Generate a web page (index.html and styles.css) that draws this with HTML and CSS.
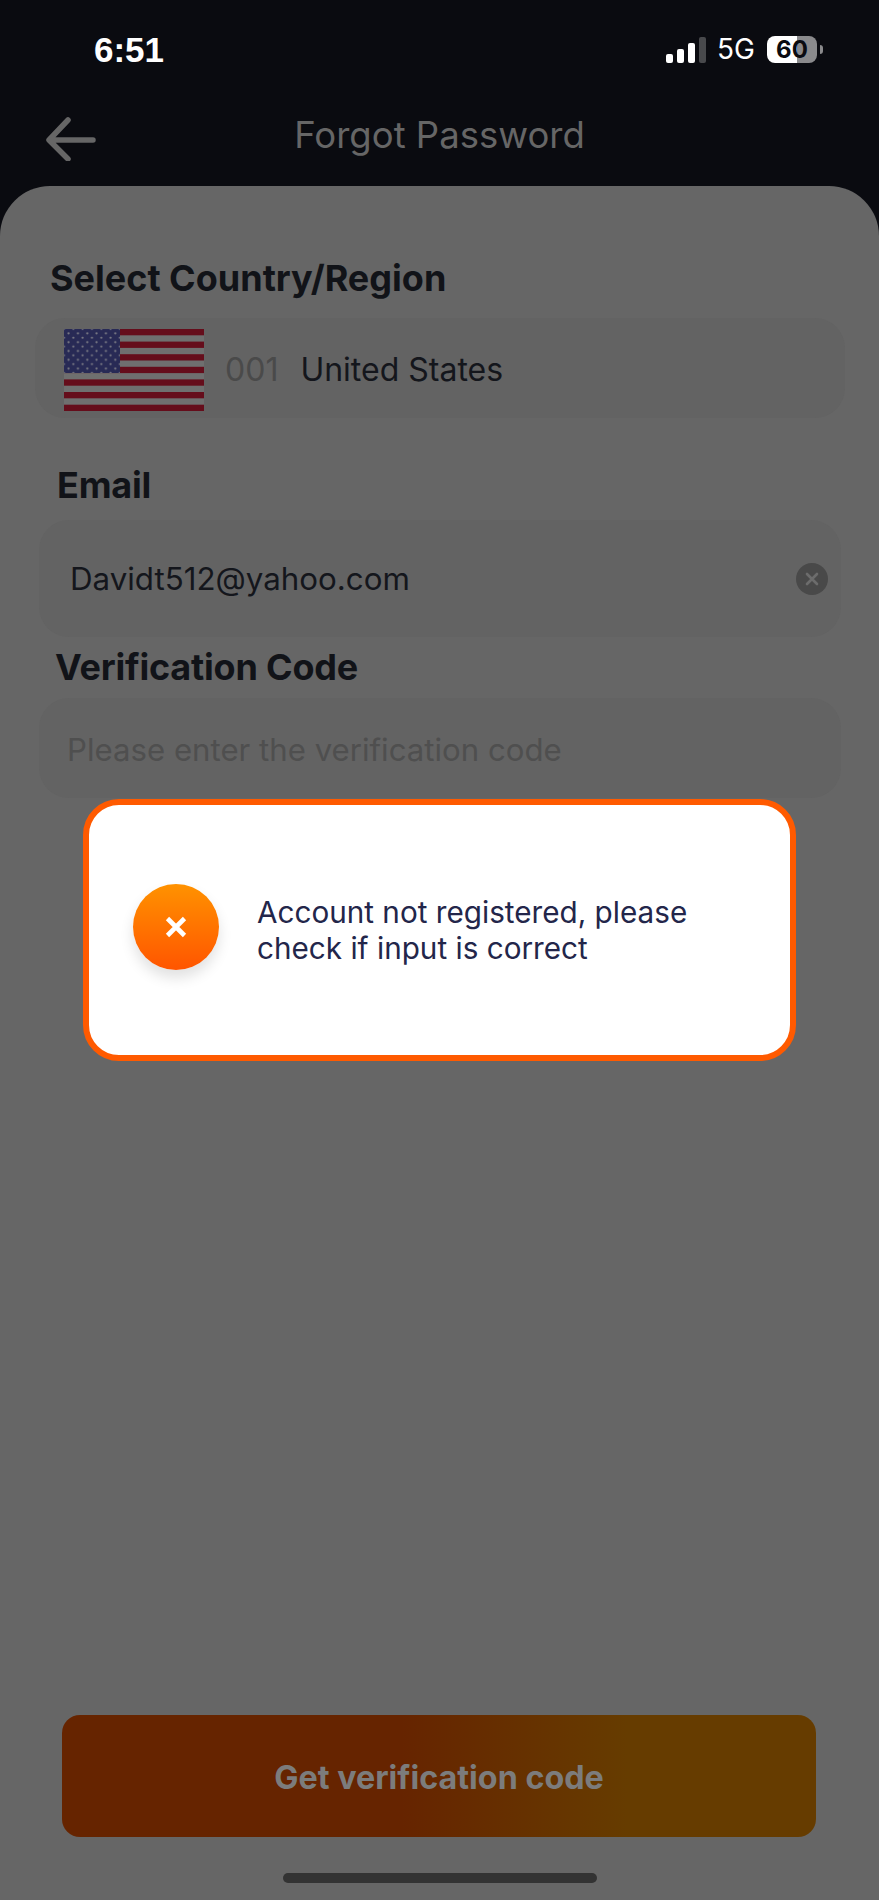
FILE: index.html
```html
<!DOCTYPE html>
<html lang="en">
<head>
    <meta charset="UTF-8">
    <title>Forgot Password</title>
    <link rel="stylesheet" href="styles.css">
</head>
<body>
<div class="page">
    <!-- Thanh trạng thái -->
    <div class="status">
        <span class="time">6:51</span>
        <div class="status-right">
            <div class="signal">
                <i class="bar b1"></i><i class="bar b2"></i><i class="bar b3"></i><i class="bar b4"></i>
            </div>
            <span class="net">5G</span>
            <div class="battery"><span>60</span></div>
            <i class="battery-cap"></i>
        </div>
    </div>

    <!-- Tiêu đề -->
    <div class="topbar">
        <svg class="back" width="50" height="44" viewBox="0 0 50 44" fill="none" stroke="#666" stroke-width="5.5" stroke-linecap="round" stroke-linejoin="round">
            <path d="M47 23H4M22 3 3 23l19 19"/>
        </svg>
        <span class="title">Forgot Password</span>
    </div>

    <div class="card">
        <h3 class="label label-country">Select Country/Region</h3>
        <div class="field field-country">
            <svg class="flag" width="140" height="82" viewBox="0 0 140 82">
                <defs>
                    <pattern id="stars" width="9.33" height="8.8" patternUnits="userSpaceOnUse" x="2.3" y="2.1">
                        <circle cx="2.3" cy="2.2" r="1.1" fill="#7d7d86"/>
                        <circle cx="7" cy="6.6" r="1.1" fill="#7d7d86"/>
                    </pattern>
                </defs>
                <rect width="140" height="82" fill="#6f6f6f"/>
                <rect y="0" width="140" height="6.3" fill="#650d1b"/>
                <rect y="12.6" width="140" height="6.3" fill="#650d1b"/>
                <rect y="25.2" width="140" height="6.3" fill="#650d1b"/>
                <rect y="37.8" width="140" height="6.3" fill="#650d1b"/>
                <rect y="50.4" width="140" height="6.3" fill="#650d1b"/>
                <rect y="63" width="140" height="6.3" fill="#650d1b"/>
                <rect y="75.7" width="140" height="6.3" fill="#650d1b"/>
                <rect width="56" height="44" fill="#282a55"/>
                <rect width="56" height="44" fill="url(#stars)"/>
            </svg>
            <span class="code">001</span>
            <span class="country">United States</span>
        </div>

        <h3 class="label label-email">Email</h3>
        <div class="field field-email">
            <span class="value">Davidt512@yahoo.com</span>
            <svg class="clear" width="32" height="32" viewBox="0 0 32 32">
                <circle cx="16" cy="16" r="16" fill="#494949"/>
                <path d="M11 11l10 10M21 11 11 21" stroke="#6c6c6c" stroke-width="2.6" stroke-linecap="round"/>
            </svg>
        </div>

        <h3 class="label label-code">Verification Code</h3>
        <div class="field field-code">
            <span class="placeholder">Please enter the verification code</span>
        </div>

        <button class="btn">Get verification code</button>
        <div class="home-bar"></div>
    </div>

    <!-- Hộp thoại lỗi -->
    <div class="dialog">
        <div class="dialog-icon">
            <svg width="24" height="24" viewBox="0 0 24 24">
                <path d="M3.5 3.5l17 17M20.5 3.5l-17 17" stroke="#fff" stroke-width="4.6"/>
            </svg>
        </div>
        <p class="dialog-text">Account not registered, please check if input is correct</p>
    </div>
</div>
</body>
</html>
```

FILE: styles.css
```css
* {
    box-sizing: border-box;
}

body {
    margin: 0;
    background: #0a0b10;
    font-family: Inter, "Liberation Sans", sans-serif;
}

.page {
    position: relative;
    width: 879px;
    height: 1900px;
    overflow: hidden;
}

/* status bar */
.status {
    height: 100px;
    padding: 31px 56px 0 94px;
    display: flex;
    justify-content: space-between;
    align-items: flex-start;
    color: #fff;
}

.time {
    font-family: "Liberation Sans", sans-serif;
    font-size: 35px;
    font-weight: 700;
    line-height: 38px;
}

.status-right {
    display: flex;
    align-items: center;
    height: 27px;
    margin-top: 5px;
}

.signal {
    display: flex;
    align-items: flex-end;
    gap: 4px;
    height: 26px;
    width: 40px;
    margin-right: 11px;
}

.bar {
    width: 7px;
    border-radius: 2px;
    background: #fff;
}

.b1 { height: 9px; }
.b2 { height: 14px; }
.b3 { height: 20px; }
.b4 { height: 26px; background: #48494c; }

.net {
    font-size: 28px;
    line-height: 27px;
    margin-right: 12px;
}

.battery {
    width: 50px;
    height: 27px;
    border-radius: 8px;
    background: linear-gradient(to right, #fff 60%, #8a8a8c 60%);
    color: #0a0b10;
    font-size: 24px;
    font-weight: 700;
    line-height: 27px;
    text-align: center;
}

.battery-cap {
    width: 3px;
    height: 9px;
    margin-left: 3px;
    border-radius: 0 3px 3px 0;
    background: #8a8a8c;
}

/* header */
.topbar {
    height: 86px;
    padding-left: 46px;
    display: flex;
    align-items: flex-start;
    position: relative;
}

.back {
    margin-top: 17px;
}

.title {
    flex: 1;
    margin-left: -96px;
    margin-top: 14px;
    font-size: 36.5px;
    line-height: 42px;
    color: #666;
    text-align: center;
}

/* card */
.card {
    height: 1714px;
    background: #666;
    border-radius: 50px 50px 0 0;
    padding-top: 72px;
    display: flex;
    flex-direction: column;
}

.label {
    margin: 0;
    font-size: 36px;
    font-weight: 700;
    line-height: 40px;
    letter-spacing: -0.2px;
    color: #111318;
}

.label-country {
    margin-left: 50px;
    letter-spacing: 0;
}
.label-email { margin: 47px 0 0 57px; }
.label-code { margin: 10px 0 0 55px; }

.field {
    display: flex;
    align-items: center;
    background: #636363;
    border-radius: 30px;
}

.field-country {
    height: 100px;
    margin: 20px 34px 0 35px;
    padding: 3px 0 0 29px;
}

.field-email {
    height: 117px;
    margin: 15px 38px 0 39px;
    padding: 0 13px 0 31px;
    justify-content: space-between;
}

.field-code {
    height: 100px;
    margin: 11px 38px 0 39px;
    padding: 3px 0 0 28px;
}

.code {
    margin-left: 21px;
    font-size: 32px;
    color: #4a4a4a;
}

.country {
    margin-left: 22px;
    font-size: 32px;
    color: #14161c;
}

.value {
    font-size: 31.3px;
    color: #14161c;
}

.placeholder {
    font-size: 31.2px;
    color: #4f4f4f;
}

.btn {
    width: 754px;
    height: 122px;
    margin: 917px 0 0 62px;
    padding-top: 3px;
    border: none;
    border-radius: 18px;
    background: linear-gradient(to right, #662400 45%, #663c00 75%);
    color: #7c7c7c;
    font-family: inherit;
    font-size: 32.3px;
    font-weight: 700;
}

.home-bar {
    width: 314px;
    height: 10px;
    margin: 36px 0 0 283px;
    border-radius: 5px;
    background: #333;
}

/* dialog */
.dialog {
    position: absolute;
    left: 83px;
    top: 799px;
    width: 713px;
    height: 262px;
    padding-left: 44px;
    display: flex;
    align-items: center;
    border: 6px solid #ff5a00;
    border-radius: 36px;
    background: #fff;
}

.dialog-icon {
    flex: none;
    width: 86px;
    height: 86px;
    margin-bottom: 6px;
    border-radius: 50%;
    background: linear-gradient(to bottom, #ff9200, #ff5500);
    box-shadow: 0 8px 14px rgba(0, 0, 0, 0.12);
    display: flex;
    align-items: center;
    justify-content: center;
}

.dialog-text {
    margin: 0 30px 1px 38px;
    font-size: 29.7px;
    line-height: 36px;
    color: #23264a;
}
```
